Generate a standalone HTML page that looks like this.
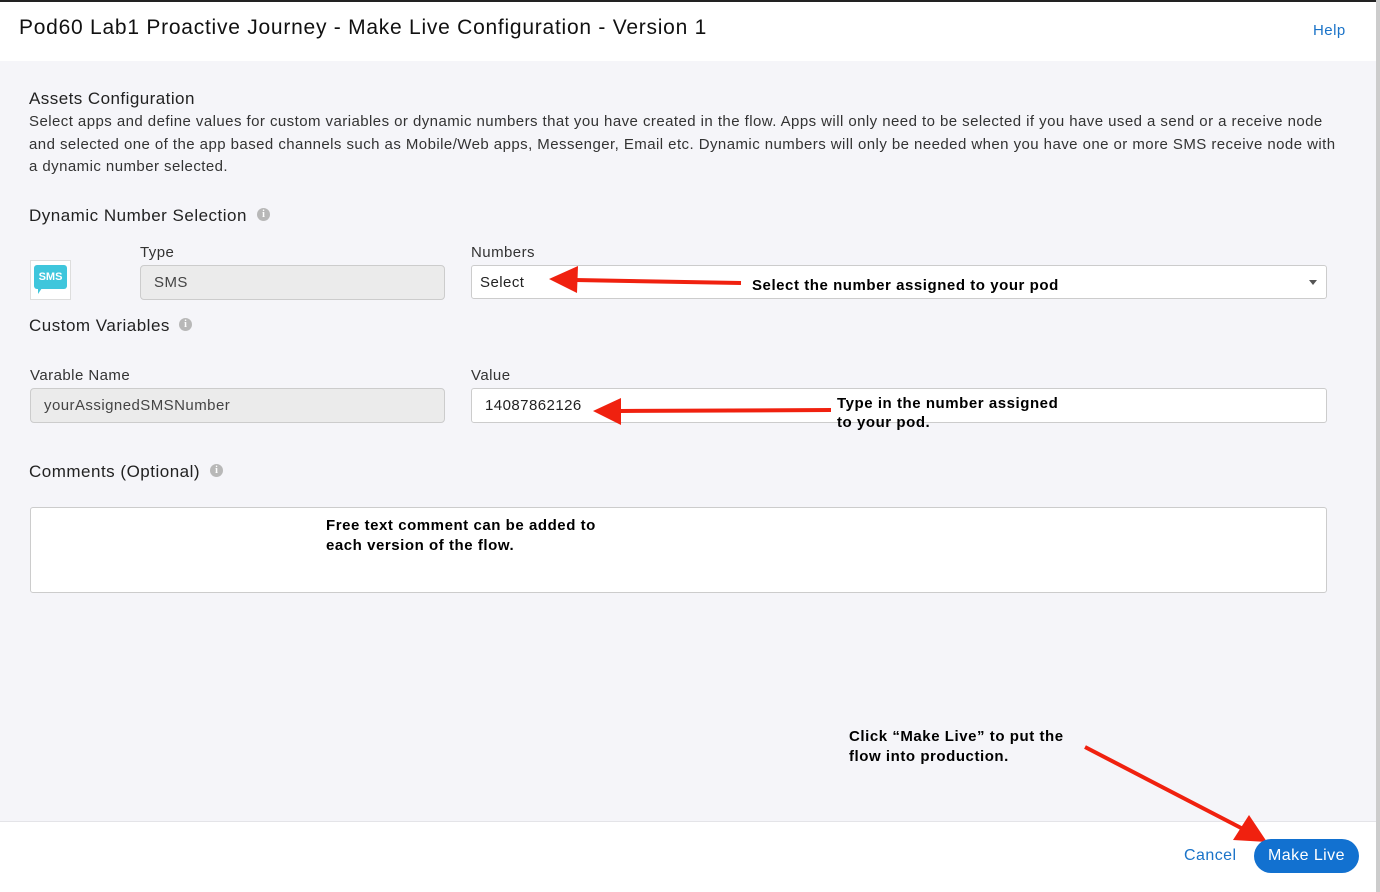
<!DOCTYPE html>
<html><head><style>
*{box-sizing:border-box;margin:0;padding:0}
body{width:1380px;height:892px;overflow:hidden;background:#fff;font-family:"Liberation Sans",sans-serif;color:#222;position:relative;letter-spacing:0.45px}
.abs{position:absolute}
.topbar{left:0;top:0;width:1380px;height:2px;background:#222}
.header{left:0;top:2px;width:1376px;height:59px;background:#fff}
.main{left:0;top:61px;width:1376px;height:760px;background:#f5f5f9}
.footer{left:0;top:821px;width:1376px;height:64px;background:#fff;border-top:1px solid #e4e4e8}
.rstrip{left:1376px;top:0;width:4px;height:892px;background:#ccc}
.t{font-size:15px;color:#333}
.field{background:#ebebeb;border:1px solid #ccc;border-radius:4px;font-size:15px;color:#444;padding-left:13px;line-height:34px}
.input{background:#fff;border:1px solid #ccc;border-radius:3px;font-size:15px;color:#222;padding-left:13px;line-height:34px}
.info{width:13px;height:13px;border-radius:50%;background:#b8b8b8;color:#fff;font-size:10px;font-weight:bold;text-align:center;line-height:13px;font-family:"Liberation Serif",serif;letter-spacing:0}
.note{font-size:15px;font-weight:bold;color:#000;line-height:20px;letter-spacing:0.55px}
</style></head><body>
<div class="abs topbar"></div>
<div class="abs header"></div>
<div class="abs main"></div>
<div class="abs footer"></div>
<div class="abs rstrip"></div>
<div class="abs" style="left:19px;top:16px;font-size:21px;color:#111;letter-spacing:0.75px">Pod60 Lab1 Proactive Journey - Make Live Configuration - Version 1</div>
<div class="abs" style="left:1313px;top:22px;font-size:15px;color:#1a73c8">Help</div>

<div class="abs" style="left:29px;top:89px;font-size:17px;color:#222">Assets Configuration</div>
<div class="abs t" style="left:29px;top:111px;white-space:nowrap;line-height:22.5px;letter-spacing:0.44px">Select apps and define values for custom variables or dynamic numbers that you have created in the flow. Apps will only need to be selected if you have used a send or a receive node<br>and selected one of the app based channels such as Mobile/Web apps, Messenger, Email etc. Dynamic numbers will only be needed when you have one or more SMS receive node with<br>a dynamic number selected.</div>

<div class="abs" style="left:29px;top:206px;font-size:17px;color:#222;letter-spacing:0.5px">Dynamic Number Selection</div>
<div class="abs info" style="left:257px;top:208px">i</div>
<div class="abs" style="left:30px;top:260px;width:41px;height:40px;background:#fff;border:1px solid #ddd"></div>
<div class="abs" style="left:34px;top:265px;width:33px;height:24px;background:#3fc6dc;border-radius:3px;color:#fff;font-size:11px;font-weight:bold;text-align:center;line-height:24px;letter-spacing:0">SMS</div>
<div class="abs" style="left:38px;top:288px;width:0;height:0;border-left:4px solid #3fc6dc;border-right:4px solid transparent;border-bottom:6px solid transparent;"></div>
<div class="abs t" style="left:140px;top:244px">Type</div>
<div class="abs field" style="left:140px;top:265px;width:305px;height:35px">SMS</div>
<div class="abs t" style="left:471px;top:244px">Numbers</div>
<div class="abs input" style="left:471px;top:265px;width:856px;height:34px;padding-left:8px">Select</div>
<div class="abs" style="left:1309px;top:280px;border-left:4px solid transparent;border-right:4px solid transparent;border-top:5px solid #555"></div>

<div class="abs" style="left:29px;top:316px;font-size:17px;color:#222;letter-spacing:0.5px">Custom Variables</div>
<div class="abs info" style="left:179px;top:318px">i</div>
<div class="abs t" style="left:30px;top:367px">Varable Name</div>
<div class="abs field" style="left:30px;top:388px;width:415px;height:35px">yourAssignedSMSNumber</div>
<div class="abs t" style="left:471px;top:367px">Value</div>
<div class="abs input" style="left:471px;top:388px;width:856px;height:35px">14087862126</div>

<div class="abs" style="left:29px;top:462px;font-size:17px;color:#222;letter-spacing:0.5px">Comments (Optional)</div>
<div class="abs info" style="left:210px;top:464px">i</div>
<div class="abs" style="left:30px;top:507px;width:1297px;height:86px;background:#fff;border:1px solid #ccc;border-radius:3px"></div>

<div class="abs note" style="left:752px;top:276px">Select the number assigned to your pod</div>
<div class="abs note" style="left:837px;top:394px;line-height:19px">Type in the number assigned<br>to your pod.</div>
<div class="abs note" style="left:326px;top:516px">Free text comment can be added to<br>each version of the flow.</div>
<div class="abs note" style="left:849px;top:727px">Click “Make Live” to put the<br>flow into production.</div>

<svg class="abs" style="left:0;top:0" width="1380" height="892">
<g fill="#f0210f" stroke="#f0210f">
<line x1="575" y1="280" x2="741" y2="283" stroke-width="4"/>
<polygon points="549,279 578,266 577,293" stroke="none"/>
<line x1="620" y1="411" x2="831" y2="410" stroke-width="4"/>
<polygon points="593,411 621,398 621,425" stroke="none"/>
<line x1="1085" y1="747" x2="1245" y2="830" stroke-width="4"/>
<polygon points="1267,842 1233,840 1249,815" stroke="none"/>
</g>
</svg>

<div class="abs" style="left:1184px;top:847px;font-size:16px;color:#1a73c8">Cancel</div>
<div class="abs" style="left:1254px;top:839px;width:105px;height:34px;border-radius:17px;background:#1271d0;color:#fff;font-size:16px;text-align:center;line-height:34px">Make Live</div>
</body></html>
